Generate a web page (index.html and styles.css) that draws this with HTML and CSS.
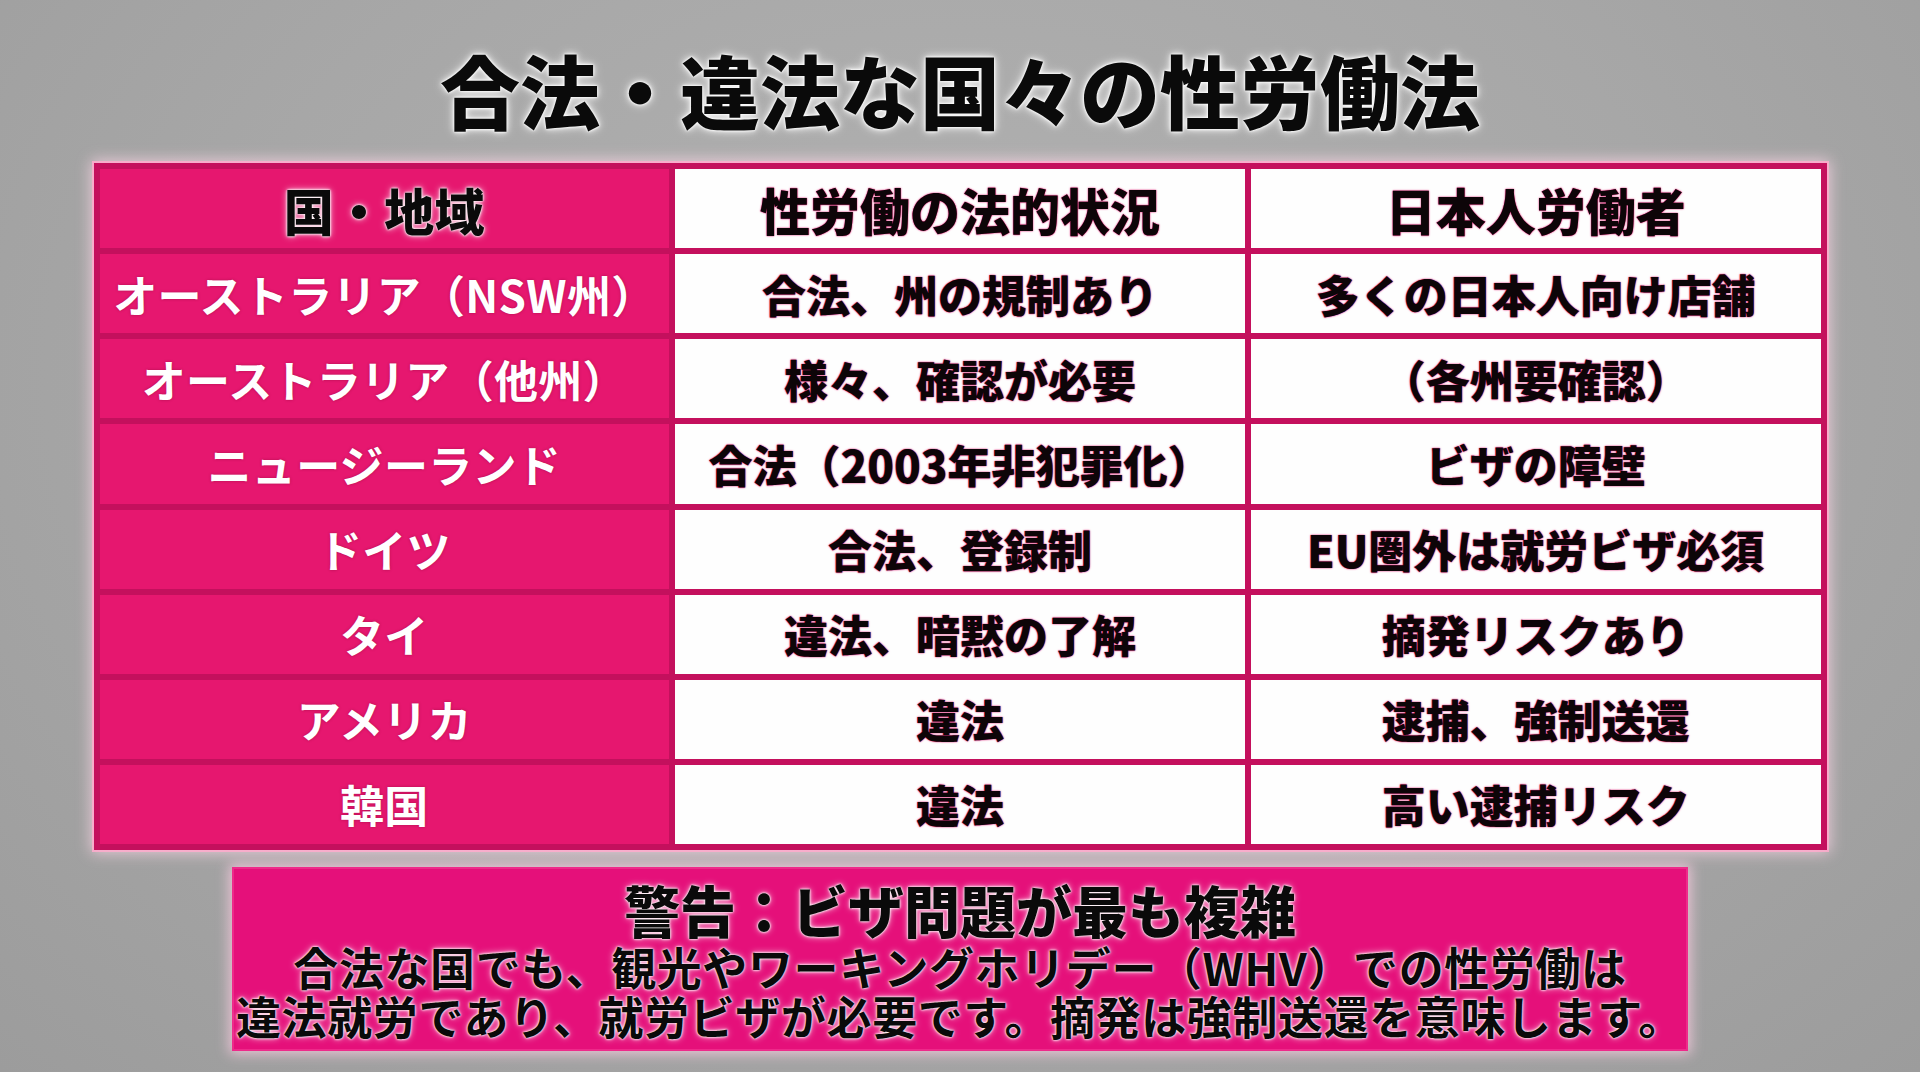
FILE: index.html
```html
<!DOCTYPE html>
<html lang="ja">
<head>
<meta charset="utf-8">
<title>合法・違法な国々の性労働法</title>
<link rel="stylesheet" href="styles.css">
</head>
<body>
<div class="page">
  <h1 class="title">合法・違法な国々の性労働法</h1>
  <div class="table">
    <div class="cell head pink">国・地域</div>
    <div class="cell head white">性労働の法的状況</div>
    <div class="cell head white">日本人労働者</div>

    <div class="cell pink">オーストラリア（NSW州）</div>
    <div class="cell white">合法、州の規制あり</div>
    <div class="cell white">多くの日本人向け店舗</div>

    <div class="cell pink">オーストラリア（他州）</div>
    <div class="cell white">様々、確認が必要</div>
    <div class="cell white">（各州要確認）</div>

    <div class="cell pink">ニュージーランド</div>
    <div class="cell white">合法（2003年非犯罪化）</div>
    <div class="cell white">ビザの障壁</div>

    <div class="cell pink">ドイツ</div>
    <div class="cell white">合法、登録制</div>
    <div class="cell white">EU圏外は就労ビザ必須</div>

    <div class="cell pink">タイ</div>
    <div class="cell white">違法、暗黙の了解</div>
    <div class="cell white">摘発リスクあり</div>

    <div class="cell pink">アメリカ</div>
    <div class="cell white">違法</div>
    <div class="cell white">逮捕、強制送還</div>

    <div class="cell pink">韓国</div>
    <div class="cell white">違法</div>
    <div class="cell white">高い逮捕リスク</div>
  </div>
  <div class="warning">
    <div class="warning-title">警告：ビザ問題が最も複雑</div>
    <div class="warning-line">合法な国でも、観光やワーキングホリデー（WHV）での性労働は</div>
    <div class="warning-line">違法就労であり、就労ビザが必要です。摘発は強制送還を意味します。</div>
  </div>
</div>
</body>
</html>
```

FILE: styles.css
```css
html, body {
  margin: 0;
  padding: 0;
}
body {
  width: 1920px;
  height: 1072px;
  overflow: hidden;
  background: radial-gradient(ellipse at 50% 35%, #b2b2b2 0%, #a7a7a7 55%, #9c9c9c 100%);
  font-family: "Noto Sans CJK JP", "Noto Sans", sans-serif;
}
.page {
  display: flex;
  flex-direction: column;
  align-items: center;
}
.title {
  margin: 48px 0 35px;
  font-size: 80px;
  line-height: 80px;
  height: 80px;
  font-weight: 900;
  color: #0a0a0a;
  letter-spacing: 0;
  text-shadow:
    0 0 2px #fff, 0 0 3px #fff, 0 0 6px rgba(255,255,255,0.9), 0 0 12px rgba(255,255,255,0.6);
}
.table {
  width: 1733px;
  height: 687px;
  box-sizing: border-box;
  display: grid;
  grid-template-columns: repeat(3, 1fr);
  grid-template-rows: repeat(8, 1fr);
  gap: 6px;
  padding: 6px;
  background: #c4105d;
  box-shadow: 0 0 0 2px rgba(255,170,205,0.85), 0 0 14px 3px rgba(255,215,232,0.75);
}
.cell {
  display: flex;
  align-items: center;
  justify-content: center;
  font-size: 44px;
  line-height: 1;
  white-space: nowrap;
}
.cell.pink {
  background: #e6176f;
  color: #fff;
  font-weight: 700;
  letter-spacing: 0.3px;
  text-shadow: 0 0 3px rgba(110,0,40,0.45);
}
.cell.white {
  background: #fefefe;
  color: #0d0508;
  font-weight: 900;
  text-shadow: 0 0 1px #e0156e, 0 0 2px rgba(224,21,110,0.8);
}
.cell.head {
  font-size: 50px;
  font-weight: 900;
}
.cell.head.pink {
  color: #0a0a0a;
  text-shadow: 0 0 2px #fff, 0 0 3px #fff, 0 0 7px rgba(255,255,255,0.8);
}
.warning {
  margin-top: 17px;
  width: 1456px;
  height: 184px;
  box-sizing: border-box;
  padding: 11px 0;
  background: #e5107a;
  border: 2px solid #ee2a8a;
  box-shadow: 0 0 12px 3px rgba(255,205,228,0.75);
  text-align: center;
  color: #0a0a0a;
  display: flex;
  flex-direction: column;
  align-items: center;
}
.warning-title {
  font-size: 56px;
  line-height: 58px;
  height: 58px;
  font-weight: 900;
  margin-bottom: 4px;
  text-shadow: 0 0 2px #fff, 0 0 3px #fff, 0 0 7px rgba(255,255,255,0.75);
}
.warning-line {
  font-size: 45px;
  line-height: 49px;
  height: 49px;
  font-weight: 700;
  letter-spacing: 0.6px;
  white-space: nowrap;
  text-shadow: 0 0 2px #fff, 0 0 3px #fff, 0 0 7px rgba(255,255,255,0.7);
}
```
